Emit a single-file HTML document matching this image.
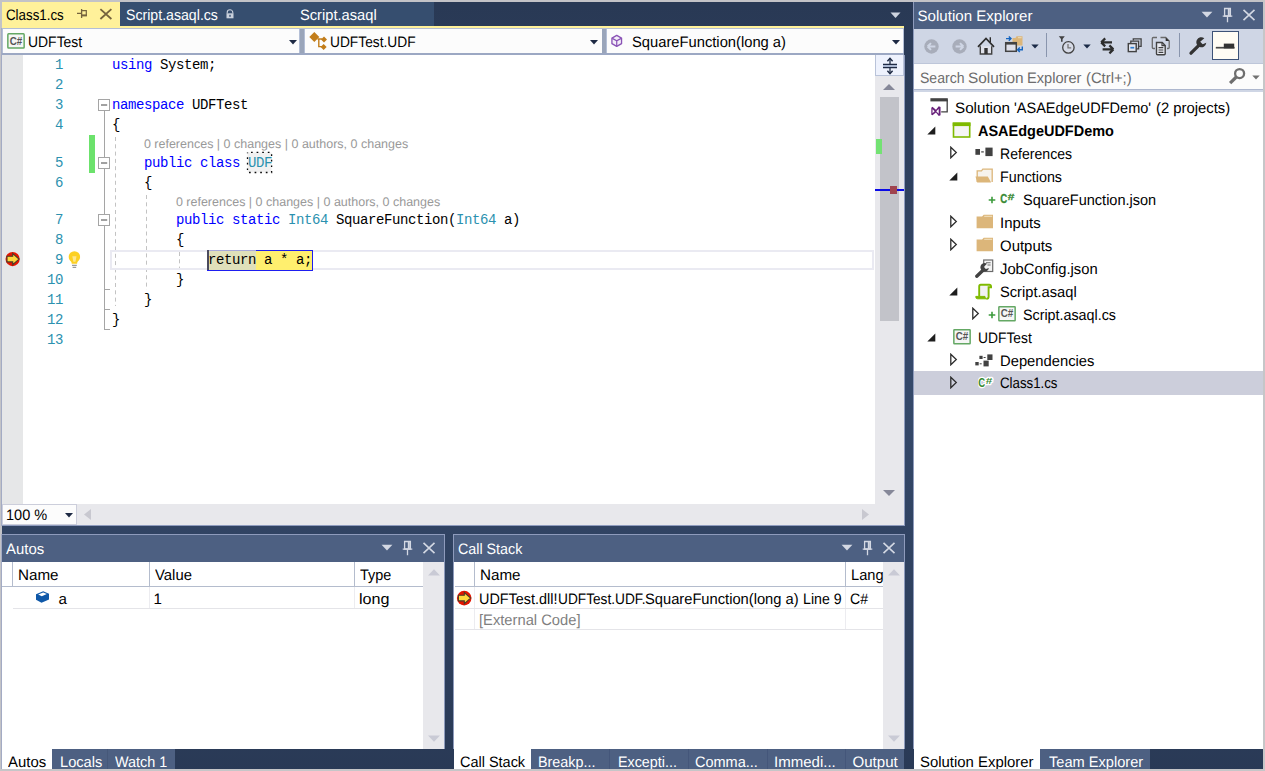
<!DOCTYPE html>
<html lang="en"><head><meta charset="utf-8"><title>Visual Studio - UDFTest (Debugging)</title>
<style>
html,body{margin:0;padding:0;background:#293955;}
body{width:1265px;height:771px;overflow:hidden;font-family:"Liberation Sans",sans-serif;}
#root{position:relative;width:1265px;height:771px;overflow:hidden;background:#293955;}
#root div,#root span.t,#root svg{position:absolute;}
.t{text-rendering:geometricPrecision;white-space:nowrap;line-height:20px;height:20px;transform-origin:0 50%;}
.b{box-sizing:border-box;}
.m{font-family:"Liberation Mono",monospace;text-rendering:auto;}
.pre{white-space:pre;}

</style></head>
<body>
<div id="root">
<!-- outer frame -->
<div style="left:0;top:0;width:1265px;height:771px;background:#c3c3c7"></div>
<div style="left:1.500px;top:1.500px;width:1262px;height:768.200px;background:linear-gradient(to bottom,#293955 4px,#35496a 362px,#35496a 400px,#293955 782px)"></div>

<div style="left:1.200px;top:28px;width:1px;height:498px;background:#a3abc4"></div>
<div style="left:1.200px;top:534px;width:1px;height:236px;background:#a3abc4"></div>
<!-- ===== document tab well ===== -->
<div style="left:2px;top:2px;width:432px;height:24px;background:#364e6f"></div>
<div style="left:2px;top:2px;width:118px;height:25px;background:#fff19a"></div>
<div style="left:2px;top:26px;width:902px;height:2px;background:#fff19a"></div>
<!-- pin -->
<svg style="left:76px;top:8px" width="13" height="13" viewBox="0 0 13 13"><path d="M1 5.400h4.400M5.600 1v9" fill="none" stroke="#75633d" stroke-width="1.300"/><path d="M5.600 2.700h4.700v5H5.600" fill="none" stroke="#75633d" stroke-width="1.200"/><path d="M5.600 7.300h5.300" stroke="#75633d" stroke-width="1.800"/></svg>
<!-- close -->
<svg style="left:99px;top:8px" width="14" height="12" viewBox="0 0 14 12"><path d="M1.400 1.200l11 9.800M12.400 1.200L1.400 11" fill="none" stroke="#75633d" stroke-width="1.800"/></svg>
<!-- lock -->
<svg style="left:226px;top:9px" width="8" height="10" viewBox="0 0 8 10"><path d="M1.200 4.400V3.400a2.800 2.600 0 0 1 5.600 0V4.400" fill="none" stroke="#c9d0dc" stroke-width="1.100"/><rect x="0.500" y="4.300" width="7" height="5" fill="#c9d0dc"/><rect x="3.200" y="5.800" width="1.600" height="2" fill="#4a5f80"/></svg>
<!-- tab overflow arrow -->
<svg style="left:890px;top:12px" width="11" height="7" viewBox="0 0 11 7"><path d="M0.5 0.5h10L5.5 6z" fill="#ced4e0"/></svg>

<!-- ===== navigation bar ===== -->
<div style="left:2px;top:28px;width:902px;height:27px;background:#b4bfd6"></div>
<div style="left:3px;top:29px;width:296px;height:24.300px;background:#fcfcfc"></div>
<div style="left:305px;top:29px;width:296.500px;height:24.300px;background:#fcfcfc"></div>
<div style="left:607px;top:29px;width:296px;height:24.300px;background:#fcfcfc"></div>
<div style="left:300.200px;top:28.500px;width:3.800px;height:26px;background:#9aa5ba"></div>
<div style="left:602.200px;top:28.500px;width:3.800px;height:26px;background:#9aa5ba"></div>
<div style="left:2px;top:53.300px;width:902px;height:1.500px;background:#9ca8c3"></div>
<svg style="left:288.800px;top:39.700px" width="8" height="5" viewBox="0 0 8 5"><path d="M0 0h8L4 4.600z" fill="#1e2a44"/></svg>
<svg style="left:589.800px;top:39.700px" width="8" height="5" viewBox="0 0 8 5"><path d="M0 0h8L4 4.600z" fill="#1e2a44"/></svg>
<svg style="left:892.300px;top:39.700px" width="8" height="5" viewBox="0 0 8 5"><path d="M0 0h8L4 4.600z" fill="#1e2a44"/></svg>

<!-- ===== editor ===== -->
<div style="left:2px;top:55px;width:903px;height:471px;background:#8f9cbe"></div>
<div style="left:2px;top:55px;width:902px;height:450px;background:#fff"></div>
<div style="left:2px;top:55px;width:21px;height:450px;background:#e6e7e8"></div>
<!-- vscroll -->
<div style="left:875.300px;top:55px;width:28.700px;height:450px;background:#e8e8ec"></div>
<div class="b" style="left:875px;top:55px;width:29px;height:21px;background:#eef2fd;border:1px solid #b9c3d9;border-top:none"></div>
<div style="left:880px;top:97px;width:19px;height:224px;background:#c2c3c9"></div>
<div style="left:876.400px;top:139px;width:5.200px;height:15px;background:#73e273"></div>
<div style="left:875.300px;top:188.500px;width:28.700px;height:2.500px;background:#0a0ae6"></div>
<div style="left:890px;top:186px;width:7px;height:8px;background:#a0444f"></div>
<svg style="left:883px;top:84px" width="12" height="6" viewBox="0 0 12 6"><path d="M0 6L6 0l6 6z" fill="#868899"/></svg>
<svg style="left:883px;top:490px" width="12" height="6" viewBox="0 0 12 6"><path d="M0 0h12L6 6z" fill="#868899"/></svg>
<!-- hscroll -->
<div style="left:2px;top:504px;width:902px;height:21px;background:#e8e8ec"></div>
<div class="b" style="left:2px;top:504px;width:75px;height:21px;background:#fcfcfc;border:1px solid #cccedb"></div>
<svg style="left:65px;top:513px" width="8" height="5" viewBox="0 0 8 5"><path d="M0 0h8L4 4.6z" fill="#1e2a44"/></svg>
<svg style="left:84px;top:509px" width="7" height="11" viewBox="0 0 7 11"><path d="M7 0v11L0 5.5z" fill="#c8c8d0"/></svg>
<svg style="left:862px;top:509px" width="7" height="11" viewBox="0 0 7 11"><path d="M0 0v11L7 5.5z" fill="#c8c8d0"/></svg>

<!-- ===== Autos panel ===== -->
<div style="left:2px;top:534px;width:443px;height:215px;background:#8e9bbc"></div>
<div style="left:2px;top:535px;width:442px;height:27px;background:#4d6082"></div>
<div style="left:2px;top:562px;width:442px;height:187px;background:#fff"></div>
<div style="left:423px;top:562px;width:21px;height:187px;background:#e8e8ec"></div>
<div style="left:2px;top:749px;width:50px;height:21px;background:#fff"></div>
<div style="left:52px;top:749px;width:123px;height:21px;background:#4d6082"></div>
<div style="left:107px;top:749px;width:1px;height:21px;background:#465879"></div>

<!-- ===== Call Stack panel ===== -->
<div style="left:452.900px;top:534px;width:452.100px;height:215px;background:#8e9bbc"></div>
<div style="left:453.900px;top:535px;width:450.100px;height:27px;background:#4d6082"></div>
<div style="left:453.900px;top:562px;width:450.100px;height:187px;background:#fff"></div>
<div style="left:883px;top:562px;width:21px;height:187px;background:#e8e8ec"></div>
<div style="left:453.900px;top:749px;width:77.100px;height:21px;background:#fff"></div>
<div style="left:531px;top:749px;width:373px;height:21px;background:#4d6082"></div>

<!-- ===== Solution Explorer ===== -->
<div style="left:913px;top:2px;width:350.500px;height:747px;background:#8e9bbc"></div>
<div style="left:914px;top:2px;width:349.500px;height:26.500px;background:#4d6082"></div>
<div style="left:914px;top:28.600px;width:349.500px;height:35.400px;background:#cfd6e5"></div>
<div style="left:914px;top:64px;width:349.500px;height:27px;background:#fcfcfc"></div>
<div style="left:914px;top:63.300px;width:349.500px;height:1px;background:#bdc6d9"></div>
<div style="left:914px;top:89px;width:349.500px;height:3px;background:#cfd6e5"></div>
<div style="left:914px;top:89px;width:349.500px;height:1.400px;background:#adb7ce"></div>
<div style="left:914px;top:92px;width:349.500px;height:657px;background:#fff"></div>
<div style="left:914px;top:371px;width:349.500px;height:23.5px;background:#cccedb"></div>
<div style="left:914px;top:749px;width:126px;height:21px;background:#fff"></div>
<div style="left:1040px;top:749px;width:110px;height:21px;background:#4d6082"></div>
<!-- ===== nav bar icons ===== -->
<svg style="left:6px;top:32px" width="20" height="18" viewBox="0 0 20 18"><rect x="1.850" y="1.850" width="16.300" height="14.100" rx="0.800" fill="#f6f6f6" stroke="#64a864" stroke-width="1.500"/><text x="10" y="13.100" font-family="Liberation Sans, sans-serif" font-size="10.500" font-weight="bold" fill="#555" text-anchor="middle" textLength="12.500" lengthAdjust="spacingAndGlyphs">C#</text></svg>
<svg style="left:308px;top:31px" width="20" height="20" viewBox="0 0 20 20"><g fill="#c27d1a"><path d="M6.3 1L11.3 6 6.3 11 1.3 6z"/><path d="M16 5.6l3 3-3 3-3-3z"/><path d="M15.6 13l3 3-3 3-3-3z"/></g><path d="M9.5 8H14M10.8 8v7.6H14" fill="none" stroke="#c27d1a" stroke-width="1.4"/></svg>
<svg style="left:610.200px;top:34.300px" width="14" height="14" viewBox="0 0 16 16"><path d="M7.7 1.6L13.2 4.7V11L7.7 14.2 2.2 11V4.7z" fill="#f3eef8" stroke="#8a53b6" stroke-width="1.5" stroke-linejoin="round"/><path d="M2.6 5L7.7 7.8 12.8 5M7.7 7.8v6" fill="none" stroke="#8a53b6" stroke-width="1.4"/></svg>

<!-- ===== editor decorations ===== -->
<!-- change bar -->
<div style="left:89px;top:135px;width:6px;height:37.5px;background:#6ce26c"></div>
<!-- outlining line -->
<div style="left:104px;top:111px;width:1px;height:218.500px;background:#a5a5a5"></div>
<div style="left:104px;top:289px;width:6px;height:1px;background:#a5a5a5"></div>
<div style="left:104px;top:309px;width:6px;height:1px;background:#a5a5a5"></div>
<div style="left:104px;top:328.500px;width:6px;height:1px;background:#a5a5a5"></div>
<!-- indent guides -->
<svg style="left:110px;top:130px" width="80" height="200" viewBox="0 0 80 200"><g stroke="#c3c3c3" stroke-width="1" stroke-dasharray="4 3.3" fill="none"><path d="M5.5 7V176"/><path d="M36.5 65V160"/><path d="M69.5 122V140"/></g></svg>
<!-- outline boxes -->
<svg style="left:98px;top:99px" width="12" height="12" viewBox="0 0 12 12"><rect x="0.5" y="0.5" width="11" height="11" fill="#fff" stroke="#a5a5a5"/><path d="M3 6h6.200" stroke="#444" stroke-width="1"/></svg>
<svg style="left:98px;top:157px" width="12" height="12" viewBox="0 0 12 12"><rect x="0.5" y="0.5" width="11" height="11" fill="#fff" stroke="#a5a5a5"/><path d="M3 6h6.200" stroke="#444" stroke-width="1"/></svg>
<svg style="left:98px;top:214px" width="12" height="12" viewBox="0 0 12 12"><rect x="0.5" y="0.5" width="11" height="11" fill="#fff" stroke="#a5a5a5"/><path d="M3 6h6.200" stroke="#444" stroke-width="1"/></svg>
<!-- UDF dotted box -->
<svg style="left:245px;top:150px" width="30" height="26" viewBox="0 0 30 26"><rect x="2.500" y="2.400" width="24.100" height="20.100" fill="#f1f1f1" stroke="#0a0a0a" stroke-width="1.300" stroke-dasharray="1.700 3.900" stroke-dashoffset="-3.500"/></svg>
<!-- current line box -->
<div class="b" style="left:110px;top:250px;width:764px;height:20px;border:2px solid #eaeaf2"></div>
<!-- current statement highlight -->
<div style="left:206.700px;top:249.700px;width:106.700px;height:21.500px;background:#1e1ef0"></div>
<div style="left:207px;top:250px;width:48.500px;height:1px;background:#a8a8da"></div>
<div style="left:208px;top:251px;width:104px;height:18.500px;background:#ffef6e"></div>
<div style="left:208px;top:251px;width:47.500px;height:18.500px;background:#e0e0ba"></div>
<div style="left:207px;top:250px;width:1.600px;height:20px;background:#4a4a5e"></div>
<!-- breakpoint / current statement glyph -->
<svg style="left:5px;top:251px" width="16" height="16" viewBox="0 0 16 16"><circle cx="7.600" cy="8.100" r="7.100" fill="#e51400"/><path d="M2 5.300h5.700V2.500l6.300 5.600-6.300 5.600V10.900H2z" fill="#ffd83d" stroke="#4c3b28" stroke-width="1.100" stroke-linejoin="miter"/></svg>
<!-- lightbulb -->
<svg style="left:67px;top:250px" width="15" height="20" viewBox="0 0 15 20"><path d="M7.4 1.200a5.700 5.700 0 0 0-5.700 5.700c0 2.200 1.300 3.400 2.300 4.600.5.600.7 1.300.7 2.200h5.400c0-.9.200-1.600.7-2.200 1-1.200 2.300-2.400 2.300-4.600a5.700 5.700 0 0 0-5.700-5.700z" fill="#fcd022"/><path d="M5.300 6.200h4.200l-1 5.500h-2.200z" fill="#ffeaa0" opacity=".85"/><path d="M5 15.300h4.800M5.600 17.300h3.600" stroke="#9a9a9a" stroke-width="1.200"/></svg>
<!-- split button icon -->
<svg style="left:882px;top:57px" width="16" height="18" viewBox="0 0 16 18"><rect x="1" y="7.200" width="14" height="3.600" fill="#a9b6d0"/><path d="M1 7.300h14M1 10.600h14" stroke="#1e2a44" stroke-width="1.200"/><path d="M8 1.500v5.500M8 11v5.500" stroke="#1e2a44" stroke-width="1.300"/><path d="M5.400 4.200L8 1.300l2.600 2.900M5.400 13.800L8 16.700l2.600-2.900" fill="none" stroke="#1e2a44" stroke-width="1.400"/></svg>
<!-- ===== tool window title buttons ===== -->
<!-- Solution Explorer -->
<svg style="left:1201px;top:11px" width="12" height="7" viewBox="0 0 12 7"><path d="M0.600 0.700h10.800L6 6.400z" fill="#d3d8e3"/></svg>
<svg style="left:1221px;top:7px" width="13" height="16" viewBox="0 0 13 16"><path d="M3.600 1.500h5.800v7.500H3.600z" fill="none" stroke="#d3d8e3" stroke-width="1.300"/><path d="M7.800 1.500v7.500" stroke="#d3d8e3" stroke-width="2"/><path d="M1.700 9.200h9.600M6.500 9.200v6" stroke="#d3d8e3" stroke-width="1.300"/></svg>
<svg style="left:1242px;top:9px" width="14" height="12" viewBox="0 0 14 12"><path d="M1.500 0.800l11 10.400M12.500 0.800l-11 10.400" fill="none" stroke="#d3d8e3" stroke-width="1.600"/></svg>
<!-- Autos -->
<svg style="left:381px;top:544px" width="12" height="7" viewBox="0 0 12 7"><path d="M0.600 0.700h10.800L6 6.400z" fill="#d3d8e3"/></svg>
<svg style="left:401px;top:540px" width="13" height="16" viewBox="0 0 13 16"><path d="M3.600 1.500h5.800v7.500H3.600z" fill="none" stroke="#d3d8e3" stroke-width="1.300"/><path d="M7.800 1.500v7.500" stroke="#d3d8e3" stroke-width="2"/><path d="M1.700 9.200h9.600M6.500 9.200v6" stroke="#d3d8e3" stroke-width="1.300"/></svg>
<svg style="left:422px;top:542px" width="14" height="12" viewBox="0 0 14 12"><path d="M1.500 0.800l11 10.400M12.500 0.800l-11 10.400" fill="none" stroke="#d3d8e3" stroke-width="1.600"/></svg>
<!-- Call Stack -->
<svg style="left:841px;top:544px" width="12" height="7" viewBox="0 0 12 7"><path d="M0.600 0.700h10.800L6 6.400z" fill="#d3d8e3"/></svg>
<svg style="left:861px;top:540px" width="13" height="16" viewBox="0 0 13 16"><path d="M3.600 1.500h5.800v7.500H3.600z" fill="none" stroke="#d3d8e3" stroke-width="1.300"/><path d="M7.800 1.500v7.500" stroke="#d3d8e3" stroke-width="2"/><path d="M1.700 9.200h9.600M6.500 9.200v6" stroke="#d3d8e3" stroke-width="1.300"/></svg>
<svg style="left:882px;top:542px" width="14" height="12" viewBox="0 0 14 12"><path d="M1.500 0.800l11 10.400M12.500 0.800l-11 10.400" fill="none" stroke="#d3d8e3" stroke-width="1.600"/></svg>

<!-- ===== Autos / Call stack grid ===== -->
<div style="left:2px;top:585.5px;width:421px;height:1.500px;background:#b4bccd"></div>
<div style="left:12px;top:562px;width:1px;height:24px;background:#b4bccd"></div>
<div style="left:149px;top:562px;width:1px;height:24px;background:#b4bccd"></div>
<div style="left:354px;top:562px;width:1px;height:24px;background:#b4bccd"></div>
<div style="left:149px;top:587px;width:1px;height:21px;background:#ececf0"></div>
<div style="left:354px;top:587px;width:1px;height:21px;background:#ececf0"></div>
<div style="left:13px;top:608px;width:410px;height:1px;background:#e4e4e8"></div>
<svg style="left:428px;top:569.300px" width="12" height="7" viewBox="0 0 12 7"><path d="M0 6.500L6 0.300l6 6.200z" fill="#c9cad5"/></svg>
<svg style="left:428px;top:735px" width="12" height="7" viewBox="0 0 12 7"><path d="M0 0.500h12L6 6.700z" fill="#c9cad5"/></svg>
<!-- variable cube icon -->
<svg style="left:35px;top:590px" width="15" height="14" viewBox="0 0 15 14"><path d="M1 4.200L8.200 1.200 14 3.800V9.500L6.500 12.800 1 9.800z" fill="#0f58a8"/><path d="M3.200 4.400L8.200 2.400 11.800 4 6.800 6.200z" fill="#fff"/></svg>

<div style="left:455px;top:585.5px;width:428px;height:1.500px;background:#b4bccd"></div>
<div style="left:474px;top:562px;width:1px;height:24px;background:#b4bccd"></div>
<div style="left:845px;top:562px;width:1px;height:24px;background:#b4bccd"></div>
<div style="left:474px;top:587px;width:1px;height:42px;background:#ececf0"></div>
<div style="left:845px;top:587px;width:1px;height:42px;background:#ececf0"></div>
<div style="left:455px;top:608px;width:428px;height:1px;background:#e4e4e8"></div>
<div style="left:455px;top:629px;width:428px;height:1px;background:#e4e4e8"></div>
<svg style="left:887.500px;top:569.300px" width="12" height="7" viewBox="0 0 12 7"><path d="M0 6.500L6 0.300l6 6.200z" fill="#c9cad5"/></svg>
<svg style="left:888px;top:735px" width="12" height="7" viewBox="0 0 12 7"><path d="M0 0.500h12L6 6.700z" fill="#c9cad5"/></svg>
<svg style="left:456px;top:590px" width="16" height="16" viewBox="0 0 16 16"><circle cx="8.200" cy="8.100" r="7.300" fill="#e51400"/><path d="M2.400 5.300h5.900V2.500l6.300 5.600-6.300 5.600V10.900H2.400z" fill="#ffd83d" stroke="#4c3b28" stroke-width="1.100" stroke-linejoin="miter"/></svg>
<!-- tab separators -->
<div style="left:609px;top:749px;width:1px;height:21px;background:#44567a"></div>
<div style="left:688px;top:749px;width:1px;height:21px;background:#44567a"></div>
<div style="left:767px;top:749px;width:1px;height:21px;background:#44567a"></div>
<div style="left:845px;top:749px;width:1px;height:21px;background:#44567a"></div>
<!-- ===== Solution Explorer icons ===== -->
<svg style="left:924.4px;top:38.5px" width="15" height="15" viewBox="0 0 15 15"><circle cx="7.500" cy="7.500" r="7.200" fill="#a8adba"/><path d="M3.600 7.500h7.800M3.600 7.500l3.400-3.400M3.600 7.500l3.400 3.400" fill="none" stroke="#cfd6e5" stroke-width="2"/></svg>
<svg style="left:951.5px;top:38.5px" width="15" height="15" viewBox="0 0 15 15"><circle cx="7.500" cy="7.500" r="7.200" fill="#a8adba"/><path d="M11.400 7.500H3.600M11.400 7.500L8 4.100M11.400 7.500L8 10.900" fill="none" stroke="#cfd6e5" stroke-width="2"/></svg>
<svg style="left:977px;top:36px" width="18" height="19" viewBox="0 0 18 19"><path d="M3.300 10.200V18h11.400V10.200" fill="#dfe1ea" stroke="#424242" stroke-width="1.400"/><path d="M1 10.800L9 2.400l8 8.400" fill="none" stroke="#2d2d2d" stroke-width="1.700"/><path d="M13.300 1.200v5" stroke="#2d2d2d" stroke-width="1.400"/><rect x="7.300" y="12" width="3.400" height="6" fill="#333"/></svg>
<svg style="left:1004px;top:35px" width="20" height="19" viewBox="0 0 20 19"><path d="M8.500 3h3l1-1.800h6V10.500H8.500z" fill="#dcb67a"/><rect x="14" y="2.200" width="3.600" height="1" fill="#f0dcb4"/><rect x="1.700" y="7.700" width="10.600" height="8.600" fill="#dfe0ea" stroke="#424242" stroke-width="1.500"/><rect x="1" y="7" width="12" height="2.600" fill="#424242"/><path d="M2 3.600h4.500M4.800 1.400l2.200 2.200-2.200 2.200" fill="none" stroke="#1565c0" stroke-width="1.400"/><path d="M18.300 11.500v3.300h-4M15.800 12.500l-2.200 2.300 2.200 2.300" fill="none" stroke="#1565c0" stroke-width="1.400"/></svg>
<svg style="left:1031px;top:44px" width="8" height="5" viewBox="0 0 8 5"><path d="M0.300 0.400h7.400L4 4.400z" fill="#1b2a47"/></svg>
<div style="left:1046px;top:33px;width:1px;height:24px;background:#8995ad"></div>
<svg style="left:1058px;top:35px" width="18" height="20" viewBox="0 0 18 20"><path d="M0.800 1.200h6L4.600 4v2.800H3V4z" fill="#424242"/><circle cx="10.400" cy="12.400" r="5.700" fill="#d6dae6" stroke="#424242" stroke-width="1.300"/><path d="M10 9v3.800h3.200" fill="none" stroke="#777" stroke-width="1.300"/></svg>
<svg style="left:1083px;top:44px" width="8" height="5" viewBox="0 0 8 5"><path d="M0.300 0.400h7.400L4 4.400z" fill="#1b2a47"/></svg>
<svg style="left:1099px;top:37px" width="16" height="18" viewBox="0 0 16 18"><path d="M2 5.400h11M2.200 5.400l4-4M2.200 5.400l4 4" fill="none" stroke="#2d2d2d" stroke-width="2.200"/><path d="M14.600 12.400H3.600M14.400 12.400l-4-4M14.400 12.400l-4 4" fill="none" stroke="#2d2d2d" stroke-width="2.200"/></svg>
<svg style="left:1127px;top:37px" width="16" height="16" viewBox="0 0 16 16"><path d="M6.300 3.600V1.800h7.800v7.600h-2" fill="none" stroke="#424242" stroke-width="1.300"/><path d="M3.800 6V4.200h7.800v7.600h-2" fill="none" stroke="#424242" stroke-width="1.300"/><rect x="1.300" y="6.600" width="7.900" height="8" fill="#e4e7f0" stroke="#424242" stroke-width="1.400"/><path d="M3.400 10.700h3.800" stroke="#2f7fd0" stroke-width="1.700"/></svg>
<svg style="left:1151px;top:36px" width="20" height="20" viewBox="0 0 20 20"><path d="M4 12.500H2.300q-1 0-1-1V2.500q0-1 1-1H6" fill="none" stroke="#6a6a6a" stroke-width="1.300"/><path d="M9.500 1.500h5.200l3.500 3.500v6.500q0 1-1 1H16" fill="none" stroke="#6a6a6a" stroke-width="1.300"/><path d="M14.700 1.500v3.500h3.500z" fill="#2d2d2d"/><path d="M5.500 6.500h5.700l3 3v8.200q0 1-1 1H6.500q-1 0-1-1z" fill="#e9ebf2" stroke="#424242" stroke-width="1.400"/><path d="M11 6.500v3.200h3.200" fill="none" stroke="#424242" stroke-width="1.200"/><path d="M7.500 11.700h4.800M7.500 14h4.800M7.500 16.300h4.800" stroke="#424242" stroke-width="1.200"/></svg>
<div style="left:1179px;top:33px;width:1px;height:24px;background:#8995ad"></div>
<svg style="left:1188px;top:36px" width="20" height="20" viewBox="0 0 20 20"><path d="M3 17.200L11.600 8.600" stroke="#333" stroke-width="3.300" stroke-linecap="round"/><path d="M16.300 2.200a5 5 0 1 0 2 4.600l-3.600 1.400-2.500-2.500z" fill="#333"/></svg>
<div class="b" style="left:1212px;top:31px;width:27px;height:29px;background:#fffcf4;border:1px solid #3d5277"></div>
<svg style="left:1215px;top:42px" width="20" height="8" viewBox="0 0 20 8"><path d="M0.800 5.700h18.800" stroke="#4a4a4a" stroke-width="1.700"/><rect x="8.800" y="1.600" width="10.400" height="4.800" fill="#333"/></svg>
<svg style="left:1228px;top:67px" width="18" height="18" viewBox="0 0 18 18"><circle cx="11.600" cy="6.600" r="4.500" fill="none" stroke="#6e6e6e" stroke-width="2.300"/><path d="M8.300 10L2.100 16.200" stroke="#6e6e6e" stroke-width="3.200"/></svg>
<svg style="left:1252px;top:74.5px" width="8" height="5" viewBox="0 0 8 5"><path d="M0.300 0.400h7.400L4 4.400z" fill="#717171"/></svg>
<svg style="left:926.8px;top:126.0px" width="9" height="9" viewBox="0 0 9 9"><path d="M8.300 0.400V8.400H0.300z" fill="#1e1e1e"/></svg>
<svg style="left:949.1px;top:171.7px" width="9" height="9" viewBox="0 0 9 9"><path d="M8.300 0.400V8.400H0.300z" fill="#1e1e1e"/></svg>
<svg style="left:949.1px;top:286.8px" width="9" height="9" viewBox="0 0 9 9"><path d="M8.300 0.400V8.400H0.300z" fill="#1e1e1e"/></svg>
<svg style="left:926.8px;top:332.9px" width="9" height="9" viewBox="0 0 9 9"><path d="M8.300 0.400V8.400H0.300z" fill="#1e1e1e"/></svg>
<svg style="left:949.5px;top:146px" width="8" height="13" viewBox="0 0 8 13"><path d="M0.800 1.200L6.300 6.500 0.800 11.800z" fill="#fff" fill-opacity="0" stroke="#2d2d2d" stroke-width="1.300" stroke-linejoin="miter"/></svg>
<svg style="left:949.5px;top:215px" width="8" height="13" viewBox="0 0 8 13"><path d="M0.800 1.200L6.300 6.500 0.800 11.800z" fill="#fff" fill-opacity="0" stroke="#2d2d2d" stroke-width="1.300" stroke-linejoin="miter"/></svg>
<svg style="left:949.5px;top:238px" width="8" height="13" viewBox="0 0 8 13"><path d="M0.800 1.200L6.300 6.500 0.800 11.800z" fill="#fff" fill-opacity="0" stroke="#2d2d2d" stroke-width="1.300" stroke-linejoin="miter"/></svg>
<svg style="left:972px;top:307px" width="8" height="13" viewBox="0 0 8 13"><path d="M0.800 1.200L6.300 6.500 0.800 11.800z" fill="#fff" fill-opacity="0" stroke="#2d2d2d" stroke-width="1.300" stroke-linejoin="miter"/></svg>
<svg style="left:949.5px;top:353px" width="8" height="13" viewBox="0 0 8 13"><path d="M0.800 1.200L6.300 6.500 0.800 11.800z" fill="#fff" fill-opacity="0" stroke="#2d2d2d" stroke-width="1.300" stroke-linejoin="miter"/></svg>
<svg style="left:949.5px;top:376px" width="8" height="13" viewBox="0 0 8 13"><path d="M0.800 1.200L6.300 6.500 0.800 11.800z" fill="#fff" fill-opacity="0" stroke="#2d2d2d" stroke-width="1.300" stroke-linejoin="miter"/></svg>
<svg style="left:929px;top:97px" width="20" height="20" viewBox="0 0 20 20"><path d="M2 3.200h16.200v11.600h-6" fill="none" stroke="#424242" stroke-width="1.300"/><rect x="1.400" y="1.200" width="17.400" height="3.200" fill="#424242"/><g transform="translate(0.900 2.400) scale(0.880)"><path d="M1.600 9.600v7.800l1.300.7 4-3.300 3.200 4 2-.9V8.600l-2-.9-3.200 4-4-3.300zM3 11.200l2.400 2.300L3 15.800zM10 10.800v5.400l-2.800-2.700z" fill="#68217a" fill-rule="evenodd"/></g></svg>
<svg style="left:952px;top:122px" width="19" height="16" viewBox="0 0 19 16"><rect x="1.500" y="1.300" width="16.200" height="13.700" fill="#f5f5f5" stroke="#7fba00" stroke-width="1.600"/><rect x="0.700" y="0.500" width="17.800" height="3.600" fill="#7fba00"/></svg>
<svg style="left:975px;top:147px" width="18" height="10" viewBox="0 0 18 10"><rect x="0.400" y="2" width="4.600" height="5.800" fill="#424242"/><rect x="6.200" y="4.300" width="2.600" height="1.200" fill="#424242"/><rect x="10.400" y="0.600" width="7.200" height="8.500" fill="#424242"/></svg>
<svg style="left:975px;top:167.5px" width="19" height="16" viewBox="0 0 19 16"><path d="M2.200 14V2.800h4.300l1.300-1.600h9.400V14" fill="#f6f3ee" stroke="#dcb67a" stroke-width="1.300"/><path d="M0.500 8.600h12.300l3.400 6H2.200z" fill="#dcb67a"/></svg>
<svg style="left:988px;top:195.5px" width="8" height="8" viewBox="0 0 8 8"><path d="M0.700 4h6.600M4 0.700v6.600" stroke="#3c9b3c" stroke-width="1.600"/></svg>
<svg style="left:999.8px;top:191.4px" width="18" height="14" viewBox="0 0 18 14"><text x="0.200" y="11.500" font-family="Liberation Sans, sans-serif" font-size="12.600" font-weight="bold" fill="#388a34" textLength="7" lengthAdjust="spacingAndGlyphs" stroke="#388a34" stroke-width="0.300">C</text><text x="7.700" y="8.800" font-family="Liberation Sans, sans-serif" font-size="9.600" font-weight="bold" fill="#388a34" textLength="6.600" lengthAdjust="spacingAndGlyphs" stroke="#388a34" stroke-width="0.300">#</text></svg>
<svg style="left:976px;top:214px" width="18" height="15" viewBox="0 0 18 15"><path d="M0.600 14.300V2.500h5.500l1.600-1.800h9.300V14.300z" fill="#dcb67a"/><rect x="8.200" y="1.800" width="8" height="1" fill="#f3e3c3"/></svg>
<svg style="left:976px;top:237px" width="18" height="15" viewBox="0 0 18 15"><path d="M0.600 14.300V2.500h5.500l1.600-1.800h9.300V14.300z" fill="#dcb67a"/><rect x="8.200" y="1.800" width="8" height="1" fill="#f3e3c3"/></svg>
<svg style="left:975px;top:258.5px" width="19" height="19" viewBox="0 0 19 19"><rect x="8.700" y="1" width="9" height="11.500" fill="#f4f4f4" stroke="#6a6a6a" stroke-width="1.200"/><path d="M11 3.800h4.600M12.500 6h3.100" stroke="#6a6a6a" stroke-width="1.100"/><path d="M1.800 17.300L8 11.200" stroke="#424242" stroke-width="3.300" stroke-linecap="round"/><path d="M12 4.700a4.300 4.300 0 1 0 1.900 4.300l-3 1.100-2.200-2.200z" fill="#424242"/></svg>
<svg style="left:975px;top:282.5px" width="19" height="17" viewBox="0 0 19 17"><path d="M4.500 2.300h11.500v2.300h-2.300v9q0 2.200-2.200 2.200H2.300q-1.300 0-1.300-1.300v-1.200h3.500z" fill="#f2f2f2"/><path d="M16 4.300V3.500q0-1.700-1.700-1.700H5.700q-1.500 0-1.500 1.700v9.800" fill="none" stroke="#7fba00" stroke-width="1.900"/><path d="M17 4.200h-3.400v9.500q0 2-2 2" fill="none" stroke="#7fba00" stroke-width="1.900"/><path d="M0.800 13.400h9.200v0.600q0 1.800 1.600 1.800H2.600q-1.800 0-1.800-1.800z" fill="#7fba00" stroke="#7fba00" stroke-width="1"/></svg>
<svg style="left:988px;top:310.5px" width="8" height="8" viewBox="0 0 8 8"><path d="M0.700 4h6.600M4 0.700v6.600" stroke="#3c9b3c" stroke-width="1.600"/></svg>
<svg style="left:997.5px;top:306.2px" width="18" height="15.5" viewBox="0 0 18 15.5"><rect x="0.850" y="0.850" width="16.3" height="13.8" rx="0.500" fill="#f6f6f6" stroke="#64a864" stroke-width="1.500"/><text x="9.0" y="11.45" font-family="Liberation Sans, sans-serif" font-size="10.500" font-weight="bold" fill="#555" text-anchor="middle" textLength="12.500" lengthAdjust="spacingAndGlyphs">C#</text></svg>
<svg style="left:952.5px;top:329.2px" width="18" height="15.5" viewBox="0 0 18 15.5"><rect x="0.850" y="0.850" width="16.3" height="13.8" rx="0.500" fill="#f6f6f6" stroke="#64a864" stroke-width="1.500"/><text x="9.0" y="11.45" font-family="Liberation Sans, sans-serif" font-size="10.500" font-weight="bold" fill="#555" text-anchor="middle" textLength="12.500" lengthAdjust="spacingAndGlyphs">C#</text></svg>
<svg style="left:975px;top:353.5px" width="18" height="13" viewBox="0 0 18 13"><g fill="#424242"><rect x="4.400" y="1.800" width="3.200" height="3.200"/><rect x="8.600" y="3" width="2" height="1"/><rect x="12.300" y="0.400" width="5.200" height="5.600"/><rect x="0.300" y="8" width="3.400" height="3.400"/><rect x="4.700" y="9.300" width="2" height="1"/><rect x="8.500" y="6.600" width="5.200" height="5.800"/></g></svg>
<svg style="left:977.5px;top:374.9px" width="18" height="14" viewBox="0 0 18 14"><text x="0.200" y="11.500" font-family="Liberation Sans, sans-serif" font-size="12.600" font-weight="bold" fill="#388a34" textLength="7" lengthAdjust="spacingAndGlyphs" stroke="#fff" stroke-width="2.400" paint-order="stroke" stroke-linejoin="round">C</text><text x="7.700" y="8.800" font-family="Liberation Sans, sans-serif" font-size="9.600" font-weight="bold" fill="#388a34" textLength="6.600" lengthAdjust="spacingAndGlyphs" stroke="#fff" stroke-width="2.400" paint-order="stroke" stroke-linejoin="round">#</text></svg>

<span class="t" style="left:5.72px;top:6px;font-size:15.1px;color:#000;transform:scaleX(0.8826);">Class1.cs</span>
<span class="t" style="left:125.76px;top:6px;font-size:15.1px;color:#fff;transform:scaleX(0.9368);">Script.asaql.cs</span>
<span class="t" style="left:299.93px;top:6px;font-size:15.1px;color:#fff;transform:scaleX(0.9720);">Script.asaql</span>
<span class="t" style="left:27.72px;top:33px;font-size:15.1px;color:#000;transform:scaleX(0.9229);">UDFTest</span>
<span class="t" style="left:329.94px;top:33px;font-size:15.1px;color:#000;transform:scaleX(0.9115);">UDFTest.UDF</span>
<span class="t" style="left:632.33px;top:33px;font-size:15.1px;color:#000;transform:scaleX(0.9761);">SquareFunction(long a)</span>
<span class="t" style="left:5.69px;top:506px;font-size:15.1px;color:#000;transform:scaleX(0.9629);">100 %</span>
<span class="t" style="left:6.37px;top:540px;font-size:15.1px;color:#fff;transform:scaleX(0.9886);">Autos</span>
<span class="t" style="left:17.95px;top:566px;font-size:15.1px;color:#000;transform:scaleX(1.0064);">Name</span>
<span class="t" style="left:155.13px;top:566px;font-size:15.1px;color:#000;transform:scaleX(0.9851);">Value</span>
<span class="t" style="left:360.47px;top:566px;font-size:15.1px;color:#000;transform:scaleX(0.9583);">Type</span>
<span class="t" style="left:58.60px;top:590px;font-size:15.1px;color:#000;">a</span>
<span class="t" style="left:153.50px;top:590px;font-size:15.1px;color:#000;">1</span>
<span class="t" style="left:359.31px;top:590px;font-size:15.1px;color:#000;transform:scaleX(1.0694);">long</span>
<span class="t" style="left:8.37px;top:753px;font-size:15.1px;color:#000;transform:scaleX(0.9886);">Autos</span>
<span class="t" style="left:59.80px;top:753px;font-size:15.1px;color:#fff;transform:scaleX(0.9700);">Locals</span>
<span class="t" style="left:115.34px;top:753px;font-size:15.1px;color:#fff;transform:scaleX(0.9554);">Watch 1</span>
<span class="t" style="left:457.67px;top:540px;font-size:15.1px;color:#fff;transform:scaleX(0.9463);">Call Stack</span>
<span class="t" style="left:479.85px;top:566px;font-size:15.1px;color:#000;transform:scaleX(1.0064);">Name</span>
<span class="t" style="left:851.20px;top:566px;font-size:15.1px;color:#000;transform:scaleX(0.9692);">Lang</span>
<span class="t" style="left:479.19px;top:590px;font-size:15.1px;color:#000;transform:scaleX(0.9540);">UDFTest.dll!</span>
<span class="t" style="left:557.54px;top:590px;font-size:15.1px;color:#000;transform:scaleX(0.9074);">UDFTest.UDF.</span>
<span class="t" style="left:645.33px;top:590px;font-size:15.1px;color:#000;transform:scaleX(0.9736);">SquareFunction(long a) </span>
<span class="t" style="left:803.24px;top:590px;font-size:15.1px;color:#000;transform:scaleX(0.9395);">Line 9</span>
<span class="t" style="left:850.19px;top:590px;font-size:15.1px;color:#000;transform:scaleX(0.9319);">C#</span>
<span class="t" style="left:479.15px;top:611px;font-size:15.1px;color:#7f7f7f;transform:scaleX(0.9755);">[External Code]</span>
<span class="t" style="left:459.87px;top:753px;font-size:15.1px;color:#000;transform:scaleX(0.9582);">Call Stack</span>
<span class="t" style="left:538.22px;top:753px;font-size:15.1px;color:#fff;transform:scaleX(0.9517);">Breakp...</span>
<span class="t" style="left:617.63px;top:753px;font-size:15.1px;color:#fff;transform:scaleX(0.9485);">Excepti...</span>
<span class="t" style="left:695.26px;top:753px;font-size:15.1px;color:#fff;transform:scaleX(0.9609);">Comma...</span>
<span class="t" style="left:774.21px;top:753px;font-size:15.1px;color:#fff;transform:scaleX(0.9948);">Immedi...</span>
<span class="t" style="left:852.49px;top:753px;font-size:15.1px;color:#fff;">Output</span>
<span class="t" style="left:917.52px;top:7px;font-size:15.1px;color:#fff;">Solution Explorer</span>
<span class="t" style="left:919.96px;top:69px;font-size:15.1px;color:#6d6d6d;transform:scaleX(0.9293);">Search </span>
<span class="t" style="left:968.00px;top:69px;font-size:15.1px;color:#6d6d6d;transform:scaleX(1.0193);">Solution </span>
<span class="t" style="left:1027.40px;top:69px;font-size:15.1px;color:#6d6d6d;transform:scaleX(0.9684);">Explorer </span>
<span class="t" style="left:1086.48px;top:69px;font-size:15.1px;color:#6d6d6d;transform:scaleX(0.9804);">(Ctrl+;)</span>
<span class="t" style="left:954.91px;top:99px;font-size:15.1px;color:#000;transform:scaleX(1.0060);">Solution </span>
<span class="t" style="left:1013.66px;top:99px;font-size:15.1px;color:#000;transform:scaleX(0.9619);">'ASAEdgeUDFDemo' </span>
<span class="t" style="left:1155.68px;top:99px;font-size:15.1px;color:#000;transform:scaleX(0.9833);">(2 projects)</span>
<span class="t" style="left:978.14px;top:122px;font-size:15.1px;color:#000;font-weight:bold;transform:scaleX(0.9590);">ASAEdgeUDFDemo</span>
<span class="t" style="left:1000.24px;top:145px;font-size:15.1px;color:#000;transform:scaleX(0.9336);">References</span>
<span class="t" style="left:1000.13px;top:168px;font-size:15.1px;color:#000;transform:scaleX(0.9471);">Functions</span>
<span class="t" style="left:1022.54px;top:191px;font-size:15.1px;color:#000;transform:scaleX(0.9621);">SquareFunction.json</span>
<span class="t" style="left:999.82px;top:214px;font-size:15.1px;color:#000;transform:scaleX(0.9902);">Inputs</span>
<span class="t" style="left:999.69px;top:237px;font-size:15.1px;color:#000;transform:scaleX(0.9903);">Outputs</span>
<span class="t" style="left:1000.17px;top:260px;font-size:15.1px;color:#000;transform:scaleX(0.9773);">JobConfig.json</span>
<span class="t" style="left:999.73px;top:283px;font-size:15.1px;color:#000;transform:scaleX(0.9720);">Script.asaql</span>
<span class="t" style="left:1022.55px;top:306px;font-size:15.1px;color:#000;transform:scaleX(0.9471);">Script.asaql.cs</span>
<span class="t" style="left:978.23px;top:329px;font-size:15.1px;color:#000;transform:scaleX(0.9159);">UDFTest</span>
<span class="t" style="left:999.99px;top:352px;font-size:15.1px;color:#000;transform:scaleX(0.9786);">Dependencies</span>
<span class="t" style="left:999.73px;top:374px;font-size:15.1px;color:#000;transform:scaleX(0.8780);">Class1.cs</span>
<span class="t" style="left:920.32px;top:753px;font-size:15.1px;color:#000;transform:scaleX(0.9876);">Solution Explorer</span>
<span class="t" style="left:1048.67px;top:753px;font-size:15.1px;color:#fff;transform:scaleX(0.9677);">Team Explorer</span>
<span class="t" style="left:143.91px;top:134px;font-size:12.5px;color:#999999;">0 references | 0 changes | 0 authors, 0 changes</span>
<span class="t" style="left:175.91px;top:192px;font-size:12.5px;color:#999999;">0 references | 0 changes | 0 authors, 0 changes</span>
<span class="t m" style="left:55.00px;top:55px;font-size:14px;color:#2b91af;letter-spacing:-0.4014px;">1</span>
<span class="t m" style="left:55.00px;top:75px;font-size:14px;color:#2b91af;letter-spacing:-0.4014px;">2</span>
<span class="t m" style="left:55.00px;top:95px;font-size:14px;color:#2b91af;letter-spacing:-0.4014px;">3</span>
<span class="t m" style="left:55.00px;top:115px;font-size:14px;color:#2b91af;letter-spacing:-0.4014px;">4</span>
<span class="t m" style="left:55.00px;top:153px;font-size:14px;color:#2b91af;letter-spacing:-0.4014px;">5</span>
<span class="t m" style="left:55.00px;top:173px;font-size:14px;color:#2b91af;letter-spacing:-0.4014px;">6</span>
<span class="t m" style="left:55.00px;top:210px;font-size:14px;color:#2b91af;letter-spacing:-0.4014px;">7</span>
<span class="t m" style="left:55.00px;top:230px;font-size:14px;color:#2b91af;letter-spacing:-0.4014px;">8</span>
<span class="t m" style="left:55.00px;top:250px;font-size:14px;color:#2b91af;letter-spacing:-0.4014px;">9</span>
<span class="t m" style="left:47.00px;top:270px;font-size:14px;color:#2b91af;letter-spacing:-0.4014px;">10</span>
<span class="t m" style="left:47.00px;top:290px;font-size:14px;color:#2b91af;letter-spacing:-0.4014px;">11</span>
<span class="t m" style="left:47.00px;top:310px;font-size:14px;color:#2b91af;letter-spacing:-0.4014px;">12</span>
<span class="t m" style="left:47.00px;top:330px;font-size:14px;color:#2b91af;letter-spacing:-0.4014px;">13</span>
<span class="t pre m" style="left:112.00px;top:55px;font-size:14px;color:#000;letter-spacing:-0.4014px;"><span style="color:#0000ff">using</span> System;</span>
<span class="t pre m" style="left:112.00px;top:95px;font-size:14px;color:#000;letter-spacing:-0.4014px;"><span style="color:#0000ff">namespace</span> UDFTest</span>
<span class="t pre m" style="left:112.00px;top:115px;font-size:14px;color:#000;letter-spacing:-0.4014px;">{</span>
<span class="t pre m" style="left:112.00px;top:153px;font-size:14px;color:#000;letter-spacing:-0.4014px;">    <span style="color:#0000ff">public</span> <span style="color:#0000ff">class</span> <span style="color:#2b91af">UDF</span></span>
<span class="t pre m" style="left:112.00px;top:173px;font-size:14px;color:#000;letter-spacing:-0.4014px;">    {</span>
<span class="t pre m" style="left:112.00px;top:210px;font-size:14px;color:#000;letter-spacing:-0.4014px;">        <span style="color:#0000ff">public</span> <span style="color:#0000ff">static</span> <span style="color:#2b91af">Int64</span> SquareFunction(<span style="color:#2b91af">Int64</span> a)</span>
<span class="t pre m" style="left:112.00px;top:230px;font-size:14px;color:#000;letter-spacing:-0.4014px;">        {</span>
<span class="t pre m" style="left:112.00px;top:250px;font-size:14px;color:#000;letter-spacing:-0.4014px;">            return a * a;</span>
<span class="t pre m" style="left:112.00px;top:270px;font-size:14px;color:#000;letter-spacing:-0.4014px;">        }</span>
<span class="t pre m" style="left:112.00px;top:290px;font-size:14px;color:#000;letter-spacing:-0.4014px;">    }</span>
<span class="t pre m" style="left:112.00px;top:310px;font-size:14px;color:#000;letter-spacing:-0.4014px;">}</span>
<!-- frame overlay -->
<div style="left:0;top:768.700px;width:1265px;height:2.300px;background:#c6c6c8"></div>
<div style="left:1263.400px;top:0;width:1.600px;height:771px;background:#c6c6c8"></div>
</div>
</body></html>
